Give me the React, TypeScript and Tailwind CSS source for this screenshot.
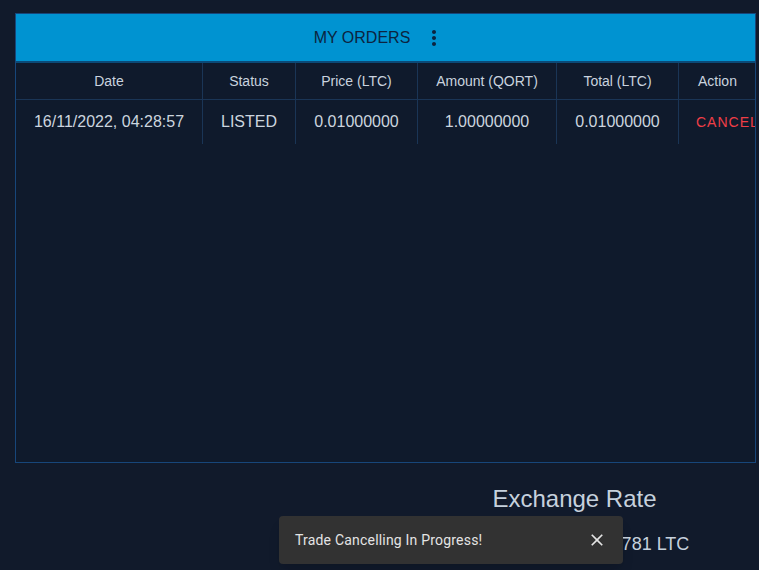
import { useState } from "react";

const columns = [
  { label: "Date", w: "w-[187px]" },
  { label: "Status", w: "w-[93px]" },
  { label: "Price (LTC)", w: "w-[122px]" },
  { label: "Amount (QORT)", w: "w-[139px]" },
  { label: "Total (LTC)", w: "w-[122px]" },
  { label: "Action", w: "w-[77px]" },
];

const orders = [
  {
    date: "16/11/2022, 04:28:57",
    status: "LISTED",
    price: "0.01000000",
    amount: "1.00000000",
    total: "0.01000000",
  },
];

const MoreIcon = () => (
  <svg viewBox="0 0 24 24" className="w-6 h-6 fill-[#0c2440]">
    <path d="M12 8c1.1 0 2-.9 2-2s-.9-2-2-2-2 .9-2 2 .9 2 2 2zm0 2c-1.1 0-2 .9-2 2s.9 2 2 2 2-.9 2-2-.9-2-2-2zm0 6c-1.1 0-2 .9-2 2s.9 2 2 2 2-.9 2-2-.9-2-2-2z" />
  </svg>
);

const CloseIcon = () => (
  <svg viewBox="0 0 24 24" className="w-5 h-5 fill-[#e4e4e4]">
    <path d="M19 6.41L17.59 5 12 10.59 6.41 5 5 6.41 10.59 12 5 17.59 6.41 19 12 13.41 17.59 19 19 17.59 13.41 12z" />
  </svg>
);

const App = () => {
  const [showToast, setShowToast] = useState(true);

  return (
    <div className="relative min-h-[570px] bg-[#111a2b] font-['Liberation_Sans',Arial,sans-serif] overflow-hidden">
      <div className="pt-[13px] pl-[15px]">
        <div className="w-[741px] h-[450px] border border-[#17467a] bg-[#0f1a2c] overflow-hidden">
          <div className="h-[49px] bg-[#0093d1] border-b-2 border-[#0b4a78] flex items-center justify-center pr-[3px]">
            <span className="text-[16px] text-[#0c2440]">MY ORDERS</span>
            <button className="w-10 h-10 ml-[4px] flex items-center justify-center">
              <MoreIcon />
            </button>
          </div>

          <div className="w-max">
            <div className="flex h-[37px] border-b border-[#1a3556]">
              {columns.map((c, i) => (
                <div
                  key={c.label}
                  className={`${c.w} shrink-0 flex items-center justify-center text-[14px] text-[#c9d3df] ${i < columns.length - 1 ? "border-r border-[#1a3556]" : ""}`}
                >
                  {c.label}
                </div>
              ))}
            </div>
            {orders.map((o) => (
              <div key={o.date} className="flex h-[44px] text-[16px] text-[#ccd5df]">
                <div className="w-[187px] shrink-0 flex items-center justify-center border-r border-[#1a3556]">{o.date}</div>
                <div className="w-[93px] shrink-0 flex items-center justify-center border-r border-[#1a3556]">{o.status}</div>
                <div className="w-[122px] shrink-0 flex items-center justify-center border-r border-[#1a3556]">{o.price}</div>
                <div className="w-[139px] shrink-0 flex items-center justify-center border-r border-[#1a3556]">{o.amount}</div>
                <div className="w-[122px] shrink-0 flex items-center justify-center border-r border-[#1a3556]">{o.total}</div>
                <div className="w-[77px] shrink-0 flex items-center pl-[17px]">
                  <span className="text-[14px] tracking-[1px] text-[#ef3e47] whitespace-nowrap">CANCEL</span>
                </div>
              </div>
            ))}
          </div>
        </div>
      </div>

      <div className="flex">
        <div className="w-[390px]" />
        <div className="flex-1 flex flex-col items-center pt-[22px] text-[#c6d1dd]">
          <h2 className="text-[24px] leading-[28px]">Exchange Rate</h2>
          <p className="text-[18px] mt-[18px]">1 QORT = 0.010001781 LTC</p>
        </div>
      </div>

      {showToast && (
        <div className="absolute left-[279px] bottom-[6px] w-[344px] h-[48px] bg-[#323232] rounded-[4px] shadow-lg flex items-center justify-between pl-[16px] pr-[16px] font-['Roboto',sans-serif]">
          <span className="text-[14px] tracking-[0.2px] text-[#e4e4e4]">Trade Cancelling In Progress!</span>
          <button onClick={() => setShowToast(false)} className="flex items-center justify-center">
            <CloseIcon />
          </button>
        </div>
      )}
    </div>
  );
};

export default App;
